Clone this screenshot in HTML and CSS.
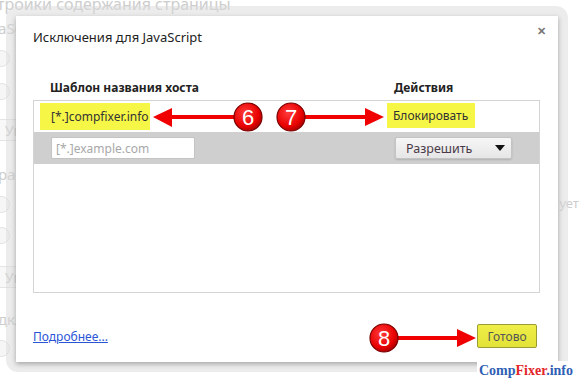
FILE: index.html
```
<!DOCTYPE html>
<html lang="ru">
<head>
  <meta charset="UTF-8" />
  <title>Исключения для JavaScript</title>
  <link rel="stylesheet" href="styles.css">
</head>
<body>
  <!-- страница настроек под диалогом (бледная) -->
  <div class="bg-page">
    <div class="bg-left">
      <div class="bg-title">тройки содержания страницы</div>
      <div class="bg-text">aSc</div>
      <div class="bg-radio r1"></div>
      <div class="bg-radio r2"></div>
      <div class="bg-btn b1">Уп</div>
      <div class="bg-text t2">раб</div>
      <div class="bg-radio r3"></div>
      <div class="bg-radio r4"></div>
      <div class="bg-btn b2">Уп</div>
      <div class="bg-text t3">дкл</div>
      <div class="bg-radio r5"></div>
    </div>
    <div class="bg-right">уетс</div>
  </div>

  <div class="frame">
    <div class="dialog">
      <div class="dlg-head">
        <h1>Исключения для JavaScript</h1>
        <span class="close">&#x2715;</span>
      </div>

      <div class="cols">
        <span class="col-host">Шаблон названия хоста</span>
        <span class="col-act">Действия</span>
      </div>

      <div class="table">
        <div class="row row-rule">
          <span class="mark host-mark">[*.]compfixer.info</span>
          <span class="mark act-mark">Блокировать</span>
        </div>
        <div class="row row-new">
          <input class="host-input" type="text" placeholder="[*.]example.com">
          <div class="select">
            <span>Разрешить</span>
            <svg width="10" height="6" viewBox="0 0 10 6"><path d="M0 0h10L5 6z" fill="#111"/></svg>
          </div>
        </div>
      </div>

      <div class="dlg-foot">
        <a href="#" class="more">Подробнее...</a>
        <button class="done">Готово</button>
      </div>
    </div>
  </div>

  <!-- стрелки и номера поверх скриншота -->
  <svg class="notes" width="579" height="381" viewBox="0 0 579 381">
    <defs>
      <radialGradient id="ball" cx="0.4" cy="0.35" r="0.7">
        <stop offset="0" stop-color="#ff3b3b"/>
        <stop offset="0.7" stop-color="#e80000"/>
        <stop offset="1" stop-color="#a00000"/>
      </radialGradient>
    </defs>
    <g fill="#f00000" stroke="none">
      <rect x="170" y="115" width="66" height="4"/>
      <polygon points="153,117 172,108 172,127"/>
      <rect x="303" y="115" width="64" height="4"/>
      <polygon points="384,117 365,108 365,126"/>
      <rect x="396" y="336" width="63" height="4"/>
      <polygon points="476,338 457,329 457,347"/>
    </g>
    <g stroke="#7a0000" stroke-width="1.2" fill="url(#ball)">
      <circle cx="248" cy="117" r="14"/>
      <circle cx="291" cy="117" r="14"/>
      <circle cx="384" cy="338" r="14"/>
    </g>
    <g class="num" fill="#fff" text-anchor="middle">
      <text x="248" y="125">6</text>
      <text x="291" y="125">7</text>
      <text x="384" y="346">8</text>
    </g>
  </svg>

  <div class="mark-site"><span class="blue">Comp</span><span class="red">Fixer</span><span class="blue">.info</span></div>
</body>
</html>
```

FILE: styles.css
```
:root {
  --fade: #cdcdcd;
  --yellow: #f6f646;
  --link: #2b55d6;
}

body {
  margin: 0;
  width: 579px;
  height: 381px;
  overflow: hidden;
  position: relative;
  background: #fff;
  font-family: 'Noto Sans', 'Open Sans', sans-serif;
  color: #333;
}

/* бледная страница на фоне */
.bg-page {
  display: flex;
  justify-content: space-between;
  height: 381px;
  color: var(--fade);
}

.bg-left {
  display: flex;
  flex-direction: column;
  align-items: flex-start;
}

.bg-title {
  height: 16px;
  line-height: 8px;
  font-size: 16px;
  margin-left: -3px;
}

.bg-text {
  height: 24px;
  line-height: 24px;
  font-size: 15px;
  margin-left: -2px;
}

.bg-radio {
  width: 15px;
  height: 15px;
  margin-left: -7px;
  border: 1px solid #e2e2e2;
  border-radius: 50%;
  background: #f6f6f6;
}

.r1 { margin-top: 10px; }
.r2 { margin-top: 16px; }
.r3 { margin-top: 10px; }
.r4 { margin-top: 14px; }
.r5 { margin-top: 9px; }

.bg-btn {
  height: 22px;
  width: 30px;
  margin-left: -8px;
  padding-left: 12px;
  box-sizing: border-box;
  line-height: 22px;
  font-size: 14px;
  border: 1px solid #e4e4e4;
  background: #f8f8f8;
}

.b1 { margin-top: 19px; }
.b2 { margin-top: 22px; }
.t2 { margin-top: 21px; }
.t3 { margin-top: 19px; }

.bg-right {
  margin-top: 194px;
  margin-right: -6px;
  font-size: 13px;
  height: 18px;
}

/* диалог */
.frame {
  position: absolute;
  left: 6px;
  top: 6px;
  width: 562px;
  height: 366px;
  padding: 10px;
  box-sizing: border-box;
  border-radius: 12px;
  background: rgba(218, 218, 218, 0.5);
}

.dialog {
  width: 542px;
  height: 346px;
  background: #fff;
  display: flex;
  flex-direction: column;
  box-shadow: 0 2px 5px rgba(0, 0, 0, 0.3);
}

.dlg-head {
  display: flex;
  justify-content: space-between;
  align-items: center;
  padding: 12px 12px 0 17px;
}

.dlg-head h1 {
  margin: 0;
  font-size: 13px;
  font-weight: normal;
  line-height: 18px;
  color: #222;
}

.close {
  font-size: 11px;
  font-weight: bold;
  color: #777;
  margin-top: -14px;
}

.cols {
  display: grid;
  grid-template-columns: 361px 1fr;
  margin: 34px 0 4px 17px;
  font-size: 12px;
  font-weight: bold;
  line-height: 16px;
  color: #222;
}

.col-host {
  padding-left: 17px;
}

.table {
  margin: 0 18px 0 17px;
  height: 193px;
  box-sizing: border-box;
  border: 1px solid #d4d4d4;
}

.row {
  display: grid;
  grid-template-columns: 353px auto;
  align-items: center;
  font-size: 12px;
}

.row-rule {
  height: 31px;
}

.mark {
  background: var(--yellow);
  color: #333;
  display: flex;
  align-items: center;
  box-sizing: border-box;
}

.host-mark {
  margin-left: 6px;
  width: 110px;
  height: 27px;
  padding-left: 11px;
  font-size: 12px;
}

.act-mark {
  width: 88px;
  height: 25px;
  padding-left: 6px;
  margin-top: -2px;
}

.row-new {
  height: 32px;
  background: #cfcfcf;
  grid-template-columns: 361px auto;
}

.host-input {
  margin-left: 17px;
  width: 144px;
  height: 22px;
  box-sizing: border-box;
  border: 1px solid #c4c4c4;
  border-radius: 2px;
  padding: 0 4px;
  font-family: inherit;
  font-size: 12px;
  background: #fff;
}

.host-input::placeholder {
  color: #a8a8a8;
}

.select {
  width: 117px;
  height: 22px;
  box-sizing: border-box;
  display: flex;
  align-items: center;
  justify-content: space-between;
  padding: 0 6px 0 10px;
  border: 1px solid #c4c4c4;
  border-radius: 2px;
  background: linear-gradient(#f6f6f6, #e6e6e6);
  box-shadow: 0 1px 2px rgba(0, 0, 0, 0.15);
  color: #4a3a48;
  font-size: 12.5px;
}

.dlg-foot {
  margin-top: auto;
  display: flex;
  justify-content: space-between;
  align-items: center;
  padding: 0 21px 14px 17px;
}

.more {
  color: var(--link);
  font-size: 12px;
}

.done {
  width: 60px;
  height: 24px;
  padding: 0;
  border: 1px solid #9c9c34;
  border-radius: 2px;
  background: linear-gradient(#eeee48, #e2e238);
  color: #555;
  font-family: inherit;
  font-size: 12px;
}

/* пометки поверх */
.notes {
  position: absolute;
  left: 0;
  top: 0;
  pointer-events: none;
}

.num text {
  font-family: 'Liberation Sans', Arial, sans-serif;
  font-size: 22px;
}

.mark-site {
  position: absolute;
  right: 0;
  bottom: 0;
  padding: 2px 6px 2px 2px;
  background: #fff;
  font-family: 'Liberation Serif', serif;
  font-weight: bold;
  font-size: 14px;
  line-height: 16px;
}

.blue { color: #2f5fb4; }
.red { color: #e3262a; }
```
